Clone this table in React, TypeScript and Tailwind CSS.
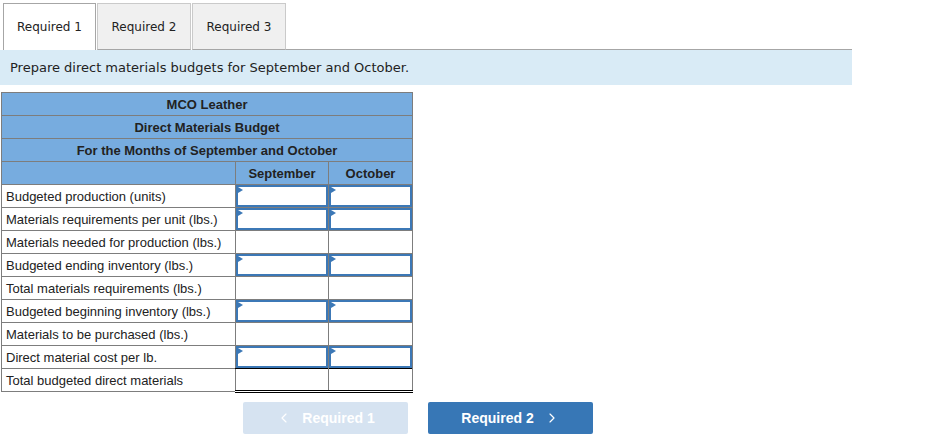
import React from "react";
import { ChevronLeft, ChevronRight } from "lucide-react";

const rows: { label: string; input: boolean; last?: boolean }[] = [
  { label: "Budgeted production (units)", input: true },
  { label: "Materials requirements per unit (lbs.)", input: true },
  { label: "Materials needed for production (lbs.)", input: false },
  { label: "Budgeted ending inventory (lbs.)", input: true },
  { label: "Total materials requirements (lbs.)", input: false },
  { label: "Budgeted beginning inventory (lbs.)", input: true },
  { label: "Materials to be purchased (lbs.)", input: false },
  { label: "Direct material cost per lb.", input: true },
  { label: "Total budgeted direct materials", input: false, last: true },
];

function InputCell() {
  return (
    <div className="relative h-[22px] w-full border-2 border-[#3c78b6] bg-white">
      <svg className="absolute left-0 top-0" width="5" height="6" viewBox="0 0 5 6">
        <polygon points="0,0 5,3 0,6" fill="#3c78b6" />
      </svg>
    </div>
  );
}

export default function App() {
  return (
    <div className="relative h-[439px] w-[947px] bg-white" style={{ fontFamily: '"Liberation Sans", Arial, sans-serif' }}>
      {/* Tabs */}
      <div className="flex w-[852px] items-end pl-[3px] pt-[3px]" style={{ fontFamily: '"DejaVu Sans", Verdana, sans-serif' }}>
        <div className="flex h-[47px] w-[93px] items-center justify-center border border-b-0 border-[#a6a6a6] bg-white text-[12px] text-[#222]">
          Required 1
        </div>
        <div className="ml-[1px] flex h-[47px] w-[94px] items-center justify-center border border-[#cacaca] border-b-[#a6a6a6] bg-[#f0f0f0] text-[12px] text-[#222]">
          Required 2
        </div>
        <div className="ml-[1px] flex h-[47px] w-[94px] items-center justify-center border border-[#cacaca] border-b-[#a6a6a6] bg-[#f0f0f0] text-[12px] text-[#222]">
          Required 3
        </div>
        <div className="flex-1 border-b border-[#a6a6a6]" />
      </div>
      {/* Instruction */}
      <div
        className="flex h-[35px] w-[852px] items-center bg-[#d9ebf6] px-[10px] text-[13px] text-[#222]"
        style={{ fontFamily: '"DejaVu Sans", Verdana, sans-serif' }}
      >
        Prepare direct materials budgets for September and October.
      </div>
      {/* Table */}
      <div className="ml-[1px] mt-[7px]">
        <table className="border-collapse text-[13px] text-[#222]">
          <colgroup>
            <col className="w-[234px]" />
            <col className="w-[93px]" />
            <col className="w-[84px]" />
          </colgroup>
          <thead>
            <tr className="h-[23px] bg-[#77acdf]">
              <th colSpan={3} className="border border-[#7d7d7d] p-0 pt-[1px] text-center font-bold">MCO Leather</th>
            </tr>
            <tr className="h-[23px] bg-[#77acdf]">
              <th colSpan={3} className="border border-[#7d7d7d] p-0 pt-[1px] text-center font-bold">Direct Materials Budget</th>
            </tr>
            <tr className="h-[23px] bg-[#77acdf]">
              <th colSpan={3} className="border border-[#7d7d7d] p-0 pt-[1px] text-center font-bold">For the Months of September and October</th>
            </tr>
            <tr className="h-[23px] bg-[#77acdf]">
              <th className="border border-[#7d7d7d] p-0" />
              <th className="border border-[#7d7d7d] p-0 pt-[1px] text-center font-bold">September</th>
              <th className="border border-[#7d7d7d] p-0 pt-[1px] text-center font-bold">October</th>
            </tr>
          </thead>
          <tbody>
            {rows.map((r) => (
              <tr key={r.label} className="h-[23px]">
                <td className="border border-[#7d7d7d] px-[4px] pt-[1px] pb-0 text-left leading-[21px]">{r.label}</td>
                {[0, 1].map((i) =>
                  r.input ? (
                    <td key={i} className="border border-[#7d7d7d] p-0">
                      <InputCell />
                    </td>
                  ) : r.last ? (
                    <td key={i} className="border border-[#7d7d7d] border-b-[3px] border-t-black border-b-black border-double p-0">
                      <div className="h-[20px]" />
                    </td>
                  ) : (
                    <td key={i} className="border border-[#7d7d7d] p-0">
                      <div className="h-[22px]" />
                    </td>
                  )
                )}
              </tr>
            ))}
          </tbody>
        </table>
      </div>
      {/* Buttons */}
      <div className="mt-[9px] flex pl-[243px]">
        <button className="flex h-[32px] w-[165px] items-center justify-center gap-[10px] rounded-[2px] bg-[#d6e3f1] text-[14px] font-bold text-white">
          <ChevronLeft size={16} strokeWidth={1.75} />
          <span>Required 1</span>
        </button>
        <button className="ml-[20px] flex h-[32px] w-[165px] items-center justify-center gap-[10px] rounded-[2px] bg-[#3777b6] text-[14px] font-bold text-white">
          <span>Required 2</span>
          <ChevronRight size={16} strokeWidth={1.75} />
        </button>
      </div>
    </div>
  );
}
